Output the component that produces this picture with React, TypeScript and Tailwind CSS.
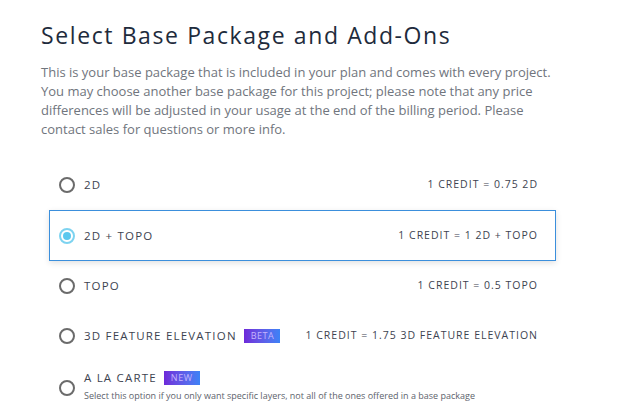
const options = [
  { id: '2d', label: '2D', rate: '1 CREDIT = 0.75 2D' },
  { id: '2d-topo', label: '2D + TOPO', rate: '1 CREDIT = 1 2D + TOPO' },
  { id: 'topo', label: 'TOPO', rate: '1 CREDIT = 0.5 TOPO' },
  { id: '3d', label: '3D FEATURE ELEVATION', rate: '1 CREDIT = 1.75 3D FEATURE ELEVATION', badge: 'BETA' },
]

function Badge({ text }: { text: string }) {
  return (
    <span className="inline-flex items-center h-[14px] w-9 pl-[7px] text-[9px] tracking-[0.5px] text-[#c4b5fd] bg-gradient-to-r from-[#6d28d9] to-[#3b82f6]">
      {text}
    </span>
  )
}

function Radio({ checked }: { checked: boolean }) {
  return checked ? (
    <div className="w-4 h-4 rounded-full border-2 border-[#7dd3f0] grid place-items-center shrink-0">
      <div className="w-2 h-2 rounded-full bg-[#5bc8ee]" />
    </div>
  ) : (
    <div className="w-4 h-4 rounded-full border-2 border-[#6b6b6b] shrink-0" />
  )
}

export default function App() {
  const selected = '2d-topo'
  return (
    <div className="w-[624px] h-[417px] bg-white overflow-hidden font-['Open_Sans',sans-serif]">
      <div className="pl-[41px] pr-[68px] pt-[20px]">
        <h1 className="text-[23px] leading-[30px] tracking-[1.6px] text-[#1e2b3c]">Select Base Package and Add-Ons</h1>
        <p className="mt-[13px] text-[13px] leading-[19px] text-[#70757d]">
          This is your base package that is included in your plan and comes with every project. You may choose another base
          package for this project; please note that any price differences will be adjusted in your usage at the end of the
          billing period. Please contact sales for questions or more info.
        </p>
      </div>
      <div className="ml-[49px] w-[507px] mt-[21px]">
        {options.map((o) => {
          const on = o.id === selected
          return (
            <div
              key={o.id}
              className={
                on
                  ? 'h-[51px] flex items-center pl-[9px] pr-[17px] border border-[#3b8fdc] shadow-[0_2px_6px_rgba(0,0,0,0.12)]'
                  : 'h-[50px] flex items-center pl-[9px] pr-[17px] border border-transparent'
              }
            >
              <Radio checked={on} />
              <span className="ml-[9px] text-[11.5px] tracking-[1.2px] text-[#3d4350] font-medium">{o.label}</span>
              {o.badge && (
                <span className="ml-[7px] flex">
                  <Badge text={o.badge} />
                </span>
              )}
              <span className="ml-auto text-[10.5px] tracking-[1px] text-[#3d4350]">{o.rate}</span>
            </div>
          )
        })}
        <div className="h-[50px] flex items-center pl-[9px] pr-[17px] border border-transparent">
          <div className="mt-[4px] shrink-0">
            <Radio checked={false} />
          </div>
          <div className="ml-[9px] flex flex-col">
            <div className="flex items-center">
              <span className="text-[11.5px] tracking-[1.2px] text-[#3d4350] font-medium">A LA CARTE</span>
              <span className="ml-[7px] flex">
                <Badge text="NEW" />
              </span>
            </div>
            <span className="mt-[3px] text-[9px] text-[#5d636c]">
              Select this option if you only want specific layers, not all of the ones offered in a base package
            </span>
          </div>
        </div>
      </div>
    </div>
  )
}
